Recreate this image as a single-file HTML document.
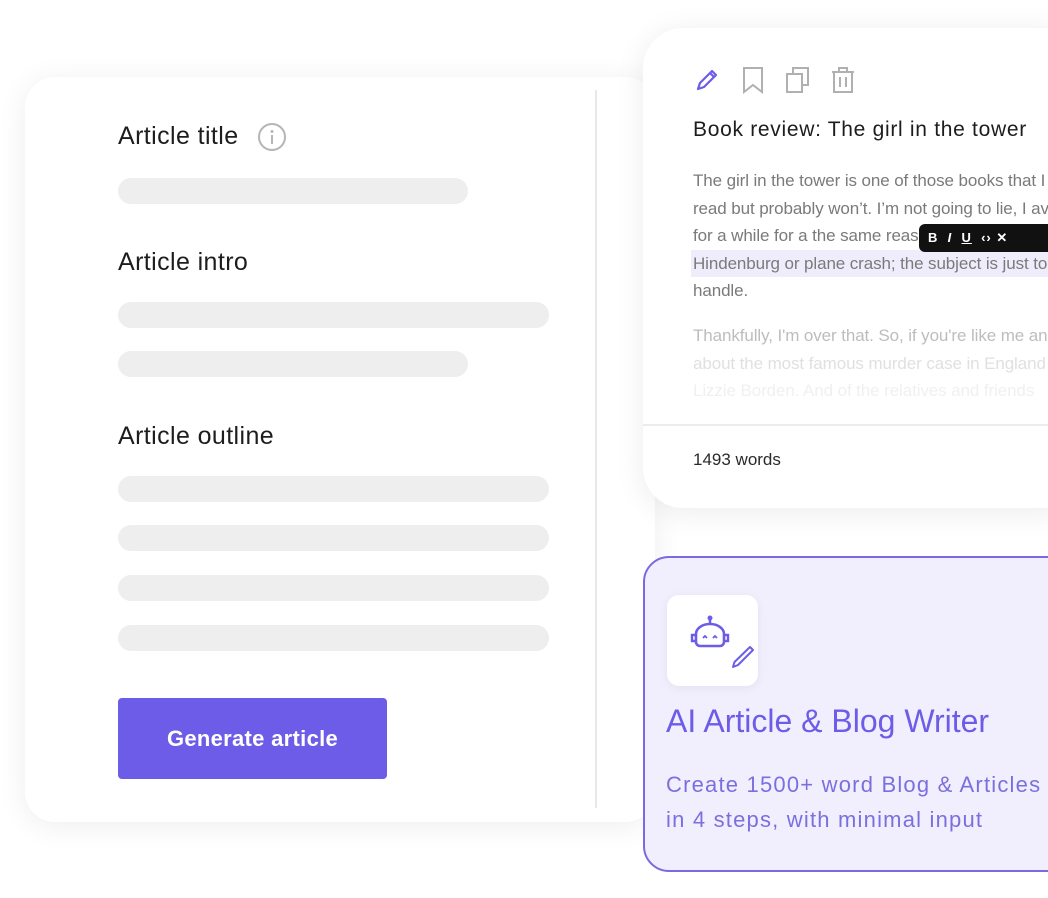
<!DOCTYPE html>
<html><head><meta charset="utf-8"><style>
*{margin:0;padding:0;box-sizing:border-box}
body{width:1048px;height:898px;background:#fff;position:relative;overflow:hidden;font-family:"Liberation Sans",sans-serif}
.a{position:absolute}
.card{left:25px;top:77px;width:630px;height:745px;background:#fff;border-radius:30px;box-shadow:0 4px 30px rgba(0,0,0,0.07)}
.lbl{font-size:25px;color:#1d1d1f;letter-spacing:0.4px}
.bar{height:26px;border-radius:13px;background:#eeeeee;left:118px}
.rc{left:643px;top:28px;width:440px;height:480px;background:#fff;border-radius:40px;box-shadow:0 4px 30px rgba(0,0,0,0.08);overflow:hidden}
.p{font-size:17px;line-height:27.5px;color:#7a7a7a;white-space:nowrap;letter-spacing:-0.1px}
</style></head><body>
<div class="a card"></div>
<div class="a" style="left:595px;top:90px;width:2px;height:718px;background:#e8e8e8"></div>
<div class="a lbl" style="left:118px;top:122px">Article title</div>
<svg class="a" style="left:257px;top:122px" width="30" height="30" viewBox="0 0 30 30"><circle cx="15" cy="15" r="13" fill="none" stroke="#b5b5b5" stroke-width="2"/><circle cx="15" cy="9.5" r="1.5" fill="#b5b5b5"/><path d="M15 13v9" stroke="#b5b5b5" stroke-width="2"/></svg>
<div class="a bar" style="top:178px;width:350px"></div>
<div class="a lbl" style="left:118px;top:248px">Article intro</div>
<div class="a bar" style="top:302px;width:431px"></div>
<div class="a bar" style="top:351px;width:350px"></div>
<div class="a lbl" style="left:118px;top:422px">Article outline</div>
<div class="a bar" style="top:476px;width:431px"></div>
<div class="a bar" style="top:525px;width:431px"></div>
<div class="a bar" style="top:575px;width:431px"></div>
<div class="a bar" style="top:625px;width:431px"></div>
<div class="a" style="left:118px;top:698px;width:269px;height:81px;background:#6c5ce7;border-radius:4px;color:#fff;font-size:22px;font-weight:bold;text-align:center;line-height:81px;letter-spacing:0.3px">Generate article</div>

<div class="a rc">
<svg class="a" style="left:50px;top:38px" width="28" height="28" viewBox="0 0 28 28"><path d="M5 23l2-6L19 5l4 4L11 21z M17 7l4 4" fill="none" stroke="#6c5ce7" stroke-width="2.2" stroke-linejoin="round"/></svg>
<svg class="a" style="left:98px;top:38px" width="24" height="28" viewBox="0 0 24 28"><path d="M3 2h18v24l-9-7-9 7z" fill="none" stroke="#b0b0b0" stroke-width="2"/></svg>
<svg class="a" style="left:142px;top:38px" width="26" height="28" viewBox="0 0 26 28"><rect x="2" y="8" width="15" height="18" fill="none" stroke="#b0b0b0" stroke-width="2"/><path d="M8 8V2h15v17h-6" fill="none" stroke="#b0b0b0" stroke-width="2"/></svg>
<svg class="a" style="left:187px;top:38px" width="26" height="28" viewBox="0 0 26 28"><path d="M2 6h22M9 6V2h8v4M4 6v20h18V6M10 11v10M16 11v10" fill="none" stroke="#b0b0b0" stroke-width="2"/></svg>
<div class="a" style="left:50px;top:90px;font-size:21px;color:#1d1d1f;white-space:nowrap;letter-spacing:0.7px">Book review: The girl in the tower</div>
<div class="a" style="left:48px;top:222px;width:400px;height:27px;background:#efedfc"></div>
<div class="a p" style="left:50px;top:139px">The girl in the tower is one of those books that I wanted to<br>read but probably won’t. I’m not going to lie, I avoided it<br>for a while for a the same reason<br>Hindenburg or plane crash; the subject is just too much to<br>handle.</div>
<div class="a p" style="left:50px;top:294px;color:#bdbdbd">Thankfully, I'm over that. So, if you're like me and curious<br><span style="color:#e0e0e0">about the most famous murder case in England</span><br><span style="color:#f0f0f0">Lizzie Borden. And of the relatives and friends</span></div>
<div class="a" style="left:0;top:372px;width:440px;height:30px;background:linear-gradient(rgba(255,255,255,0),#fff)"></div>
<div class="a" style="left:276px;top:196px;width:140px;height:28px;background:#111;border-radius:6px;color:#fff;font-size:13px;font-weight:bold;line-height:28px;padding-left:9px;white-space:nowrap;letter-spacing:1px">B&nbsp;&nbsp;<i>I</i>&nbsp;&nbsp;<u>U</u>&nbsp;&nbsp;‹›&nbsp;✕</div>
<div class="a" style="left:0;top:396px;width:440px;height:2px;background:#ececec"></div>
<div class="a" style="left:50px;top:422px;font-size:17px;color:#2a2a2a">1493 words</div>
</div>

<div class="a" style="left:643px;top:556px;width:440px;height:316px;background:#f1effd;border:2px solid #7a6ae0;border-radius:26px"></div>
<div class="a" style="left:667px;top:595px;width:91px;height:91px;background:#fff;border-radius:12px;box-shadow:0 2px 10px rgba(0,0,0,0.06)"></div>
<svg class="a" style="left:684px;top:612px" width="78" height="62" viewBox="0 0 78 62"><circle cx="26" cy="6" r="2.5" fill="#6c5ce7"/><path d="M26 8v4" stroke="#6c5ce7" stroke-width="2.5"/><path d="M12 22a14 10 0 0 1 28 0v8a4 4 0 0 1-4 4H16a4 4 0 0 1-4-4z" fill="none" stroke="#6c5ce7" stroke-width="2.6"/><path d="M12 23H8v6h4M40 23h4v6h-4" fill="none" stroke="#6c5ce7" stroke-width="2.4"/><path d="M19 26l2-2 2 2M29 26l2-2 2 2" fill="none" stroke="#6c5ce7" stroke-width="1.8"/><path d="M49 55l1.5-5L66 35l3 3L54 53z" fill="none" stroke="#6c5ce7" stroke-width="2" stroke-linejoin="round"/></svg>
<div class="a" style="left:666px;top:703px;font-size:32px;color:#6c5ce7;white-space:nowrap;letter-spacing:0px">AI Article &amp; Blog Writer</div>
<div class="a" style="left:666px;top:767px;font-size:22px;line-height:35px;color:#7b6fe0;white-space:nowrap;letter-spacing:1.2px">Create 1500+ word Blog &amp; Articles<br>in 4 steps, with minimal input</div>
</body></html>
